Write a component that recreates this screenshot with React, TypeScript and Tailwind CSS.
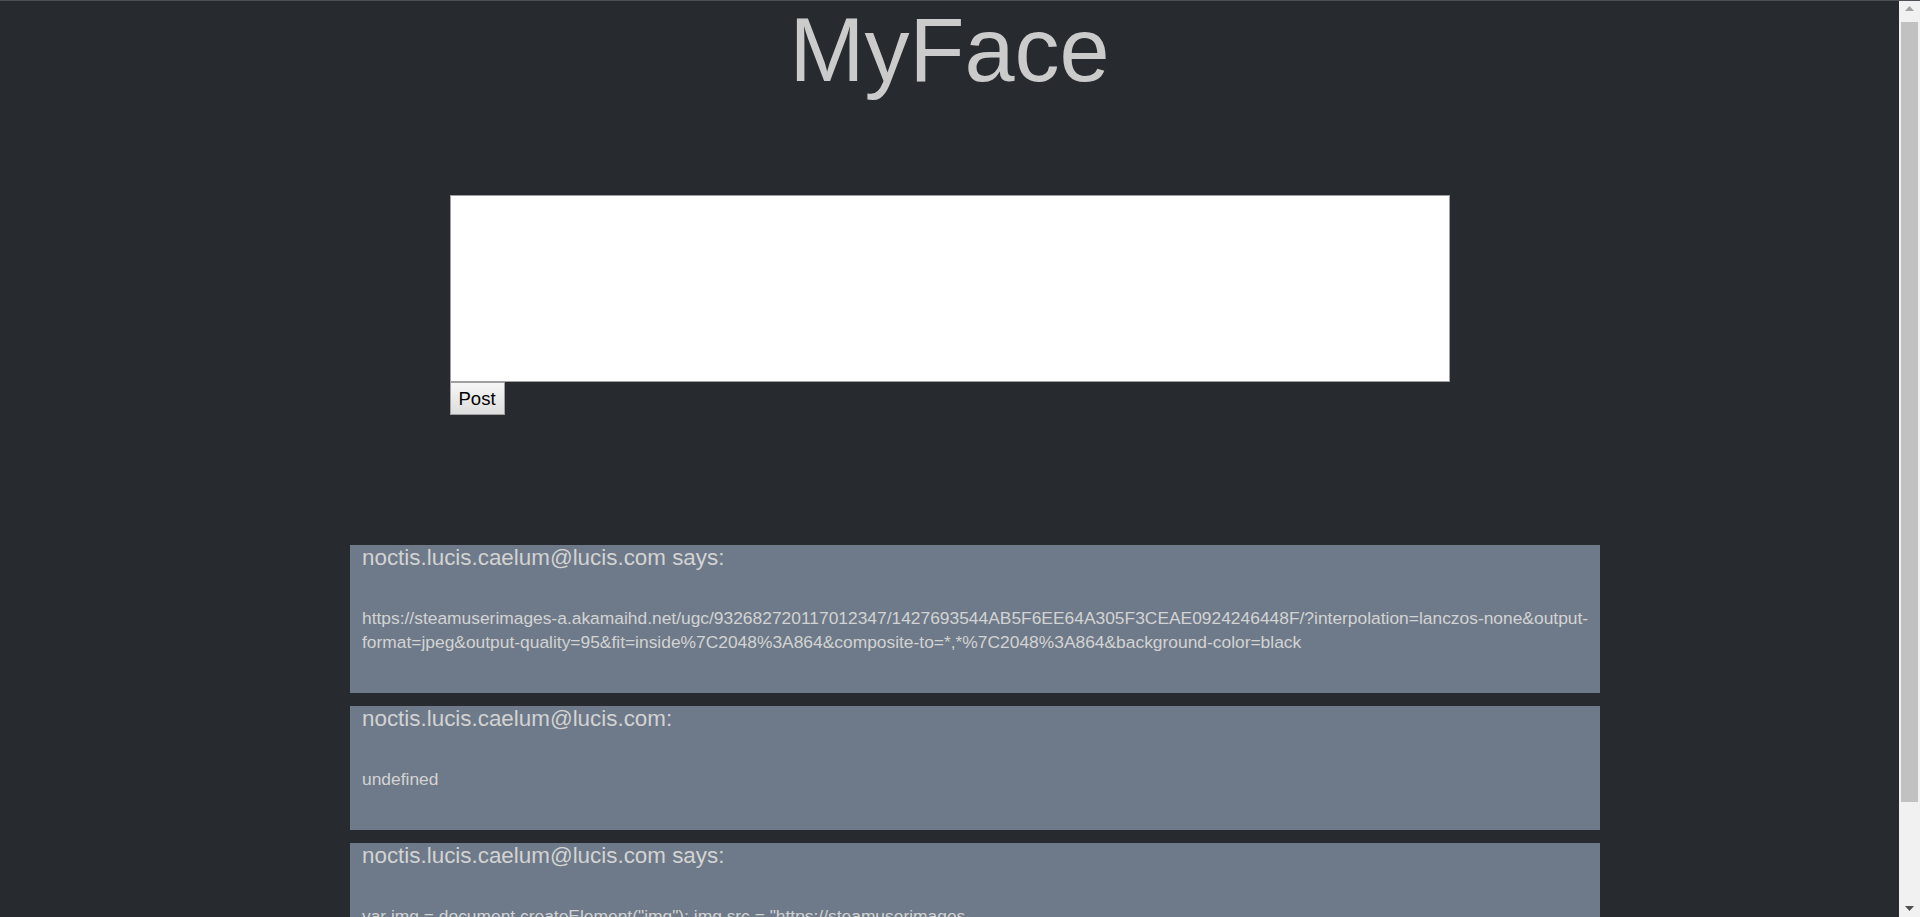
import React from 'react';

type Post = { author: string; says: boolean; body: string };

const posts: Post[] = [
  {
    author: 'noctis.lucis.caelum@lucis.com',
    says: true,
    body:
      'https://steamuserimages-a.akamaihd.net/ugc/932682720117012347/1427693544AB5F6EE64A305F3CEAE0924246448F/?interpolation=lanczos-none&output-format=jpeg&output-quality=95&fit=inside%7C2048%3A864&composite-to=*,*%7C2048%3A864&background-color=black',
  },
  { author: 'noctis.lucis.caelum@lucis.com', says: false, body: 'undefined' },
  {
    author: 'noctis.lucis.caelum@lucis.com',
    says: true,
    body:
      'var img = document.createElement("img"); img.src = "https://steamuserimages-a.akamaihd.net/ugc/932682720117012347/1427693544AB5F6EE64A305F3CEAE0924246448F/"; document.body.appendChild(img);',
  },
];

function Scrollbar() {
  return (
    <div className="w-[21px] h-full bg-[#f1f1f1] flex flex-col items-center shrink-0">
      <div className="h-[14px] w-full flex items-center justify-center">
        <svg width="9" height="5" viewBox="0 0 9 5">
          <path d="M0 5 L4.5 0 L9 5 Z" fill="#a3a3a3" />
        </svg>
      </div>
      <div className="mt-[7px] w-[17px] h-[780px] bg-[#c1c1c1]" />
      <div className="flex-1" />
      <div className="h-[18px] w-full flex items-center justify-center">
        <svg width="9" height="5" viewBox="0 0 9 5">
          <path d="M0 0 L9 0 L4.5 5 Z" fill="#505050" />
        </svg>
      </div>
    </div>
  );
}

export default function App() {
  return (
    <div className="h-[917px] overflow-hidden flex bg-[#272a2f] border-t border-[#4d5055] font-['Liberation_Sans',Arial,sans-serif]">
      <div className="flex-1 min-w-0 overflow-hidden">
        {/* Title */}
        <h1 className="text-center text-[90px] leading-[98px] text-[#cbcbcb]">MyFace</h1>

        {/* New post */}
        <div className="w-[1000px] mx-auto mt-[96px]">
          <textarea className="block w-full h-[187px] bg-white border border-[#a0a0a0] resize-none outline-none" />
          <button className="block h-[33px] px-[8px] border border-[#a0a0a0] bg-gradient-to-b from-[#f7f7f7] to-[#dddddd] text-[18.5px] leading-[20px] text-black">
            Post
          </button>
        </div>

        {/* Feed */}
        <div className="ml-[350px] w-[1250px] mt-[130px] flex flex-col gap-[13px]">
          {posts.map((p, i) => (
            <div key={i} className="bg-[#6e7a89] pl-[12px] pb-[39px] text-[#d3d3d3]">
              <div className="text-[22.4px] leading-[25px]">
                {p.author}
                {p.says ? ' says:' : ':'}
              </div>
              <p className="mt-[36px] text-[17.4px] leading-[24px]">{p.body}</p>
            </div>
          ))}
        </div>
      </div>
      <Scrollbar />
    </div>
  );
}
